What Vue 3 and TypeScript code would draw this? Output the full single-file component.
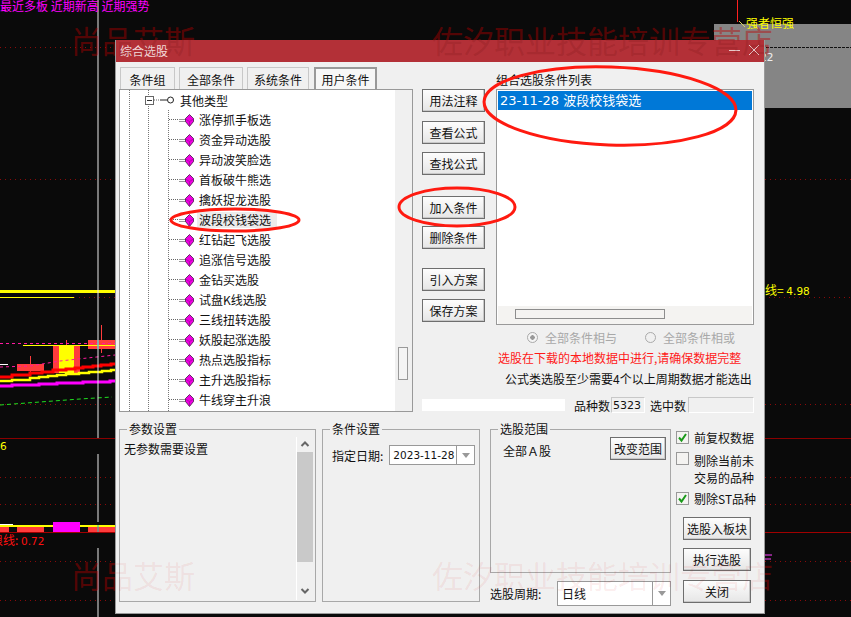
<script setup lang="ts">
interface TreeLeaf {
  label: string;
  hovered?: boolean;
}

const tabs = ["条件组", "全部条件", "系统条件", "用户条件"];

const leaves: TreeLeaf[] = [
  { label: "涨停抓手板选" },
  { label: "资金异动选股" },
  { label: "异动波笑脸选" },
  { label: "首板破牛熊选" },
  { label: "擒妖捉龙选股" },
  { label: "波段校钱袋选", hovered: true },
  { label: "红钻起飞选股" },
  { label: "追涨信号选股" },
  { label: "金钻买选股" },
  { label: "试盘K线选股" },
  { label: "三线扭转选股" },
  { label: "妖股起涨选股" },
  { label: "热点选股指标" },
  { label: "主升选股指标" },
  { label: "牛线穿主升浪" },
];

// 中间一列按钮，gap 是和上一个按钮的间距
const actions = [
  { label: "用法注释", gap: 0 },
  { label: "查看公式", gap: 9 },
  { label: "查找公式", gap: 8 },
  { label: "加入条件", gap: 21 },
  { label: "删除条件", gap: 7 },
  { label: "引入方案", gap: 19 },
  { label: "保存方案", gap: 8 },
];
</script>

<template>
  <div class="desk">
    <!-- 背后的K线图 -->
    <svg class="chart" width="851" height="617" viewBox="0 0 851 617">
      <g stroke="#8a0a0a" stroke-dasharray="1 4">
        <line x1="0" y1="47.5" x2="851" y2="47.5" />
        <line x1="0" y1="179.5" x2="851" y2="179.5" />
        <line x1="74" y1="297.5" x2="851" y2="297.5" />
        <line x1="0" y1="404.5" x2="851" y2="404.5" />
        <line x1="0" y1="477.5" x2="851" y2="477.5" />
        <line x1="0" y1="504.5" x2="851" y2="504.5" />
        <line x1="0" y1="561.5" x2="851" y2="561.5" />
        <line x1="0" y1="600.5" x2="851" y2="600.5" />
      </g>
      <rect x="714" y="24" width="137" height="84" fill="#858585" />
      <line x1="714" y1="47.5" x2="851" y2="47.5" stroke="#111" stroke-dasharray="3 1" />
      <line x1="0" y1="438.5" x2="851" y2="438.5" stroke="#8a0000" />
      <line x1="0" y1="532.5" x2="851" y2="532.5" stroke="#a00000" />
      <rect x="0" y="290" width="115" height="3" fill="#ffff00" />
      <rect x="0" y="297" width="74" height="1" fill="#ffff00" />

      <rect x="88" y="340" width="27" height="9" fill="#ff3c3c" />
      <line x1="101.5" y1="325" x2="101.5" y2="353" stroke="#ff3c3c" />
      <rect x="53" y="345" width="27" height="28" fill="#ff3c3c" />
      <rect x="59" y="345" width="15" height="28" fill="#ffff00" />
      <line x1="66.5" y1="340" x2="66.5" y2="345" stroke="#ff3c3c" />
      <rect x="17" y="364" width="27" height="7" fill="#ff3c3c" />
      <line x1="30.5" y1="356" x2="30.5" y2="374" stroke="#ff3c3c" />
      <line x1="23" y1="345.5" x2="115" y2="345.5" stroke="#ffff00" />
      <rect x="0" y="364" width="8" height="1" fill="#fff" />
      <path d="M0 343.5H115" stroke="#ff1aa0" stroke-dasharray="3 3" fill="none" />
      <path d="M0 367L30 366L60 361L115 355" stroke="#ff1aa0" stroke-dasharray="3 3" fill="none" />
      <path d="M0 377H12V375H30V373H42V372H53V370H66V369H75V368H83V367H93V366H101V365H111V364H115" stroke="#ff0000" stroke-width="3" fill="none" />
      <path d="M0 381H12V380H30V378H39V377H48V376H57V375H66V374H79V373H89V372H102V371H111V370H115" stroke="#ffff00" stroke-width="2.5" fill="none" />
      <path d="M0 386H12V385H39V384H57V383H83V382H110V381H115" stroke="#ff00ff" stroke-width="3" fill="none" />
      <path d="M0 405L40 402L80 399L112 397" stroke="#20e020" stroke-dasharray="4 3" fill="none" />

      <rect x="0" y="527" width="9" height="5" fill="#ff3c3c" />
      <rect x="17" y="527" width="27" height="5" fill="#ff3c3c" />
      <rect x="88" y="527" width="27" height="5" fill="#ff3c3c" />
      <rect x="0" y="525" width="115" height="2" fill="#ffff00" />
      <rect x="0" y="524" width="13" height="1" fill="#fff" />
      <rect x="53" y="522" width="27" height="10" fill="#ff00ff" />

      <path d="M98 0V438M98 454V522M98 548V617" stroke="#e8e8e8" fill="none" />
      <path d="M98 340V349M98 525V532" stroke="#20c0c0" fill="none" />
      <line x1="737.5" y1="0" x2="737.5" y2="22" stroke="#ff2020" />
      <path d="M745 27L739 21" stroke="#d8d860" fill="none" />
      <path d="M765 555h7M765 559h6" stroke="#ff40ff" fill="none" />
    </svg>

    <!-- 窗口后面的水印 -->
    <div class="mark mark-left mark-top mark-back">尚品艾斯</div>
    <div class="mark mark-right mark-top mark-back">佐汐职业技能培训专营店</div>
    <div class="mark mark-left mark-bottom mark-back">尚品艾斯</div>
    <div class="mark mark-right mark-bottom mark-back">佐汐职业技能培训专营店</div>

    <div class="quote-links">最近多板 近期新高 近期强势</div>
    <div class="tag tag-strong">强者恒强</div>
    <div class="tag tag-gray num">22</div>
    <div class="tag tag-line">线= <span class="num">4.98</span></div>
    <div class="tag tag-six num">6</div>
    <div class="tag tag-red">浪线: <span class="num">0.72</span></div>

    <!-- 综合选股窗口 -->
    <section class="dialog">
      <header class="titlebar">
        <span>综合选股</span>
        <div class="window-btns">
          <svg width="12" height="12" viewBox="0 0 12 12"><path d="M1 6.5H12" stroke="#e8c8c8" fill="none" /></svg>
          <svg width="12" height="12" viewBox="0 0 12 12"><path d="M1 1L11 11M11 1L1 11" stroke="#e8c8c8" fill="none" /></svg>
        </div>
      </header>

      <div class="upper">
        <div class="tree-col">
          <div class="tabs">
            <div v-for="(tab, i) in tabs" :key="tab" class="tab" :class="'tab-' + i">{{ tab }}</div>
          </div>
          <div class="tree">
            <div class="tree-rows">
              <div class="guide guide-a"></div>
              <div class="guide guide-b"></div>
              <div class="guide guide-c"></div>
              <div class="row parent">
                <span class="expander"></span>
                <svg class="node-icon" width="20" height="10" viewBox="0 0 20 10">
                  <path d="M0 5H6" stroke="#666" stroke-dasharray="1 1" fill="none" />
                  <path d="M6 5H13" stroke="#222" fill="none" />
                  <circle cx="16.5" cy="5" r="3" fill="#fff" stroke="#222" />
                </svg>
                <span class="parent-label">其他类型</span>
              </div>
              <div v-for="leaf in leaves" :key="leaf.label" class="row leaf">
                <svg class="leaf-icon" width="26" height="13" viewBox="0 0 26 13">
                  <path d="M0 5.5H11" stroke="#666" stroke-dasharray="1 1" fill="none" />
                  <path d="M10 5.5H17M10 7.5H17" stroke="#999" fill="none" />
                  <path d="M20.5 .5L24.5 4.5V7.5L20.5 12.5L16.5 7.5V4.5Z" fill="#f000e0" stroke="#3a2040" stroke-width=".8" />
                  <path d="M16.5 5L20.5 7.5L24.5 5M20.5 7.5V12" stroke="#a000a0" stroke-width=".7" fill="none" />
                </svg>
                <span class="leaf-label" :class="{ hovered: leaf.hovered }">{{ leaf.label }}</span>
              </div>
            </div>
            <div class="tree-scroll"><div class="tree-thumb"></div></div>
          </div>
        </div>

        <div class="actions">
          <button v-for="a in actions" :key="a.label" class="btn" :style="{ marginTop: a.gap + 'px' }">{{ a.label }}</button>
        </div>

        <div class="list-col">
          <div class="list-title">组合选股条件列表</div>
          <div class="list">
            <div class="list-body">
              <div class="list-selected">23-11-28 波段校钱袋选</div>
            </div>
            <div class="hscroll"><div class="hthumb"></div></div>
          </div>
          <div class="radios">
            <span class="radio checked"></span><span class="radio-label">全部条件相与</span>
            <span class="radio second"></span><span class="radio-label">全部条件相或</span>
          </div>
          <div class="warn">选股在下载的本地数据中进行,请确保数据完整</div>
          <div class="hint">公式类选股至少需要4个以上周期数据才能选出</div>
        </div>
      </div>

      <div class="counts">
        <div class="progress"></div>
        <span class="count-a">品种数</span>
        <span class="count-box count-num">5323</span>
        <span class="count-b">选中数</span>
        <span class="count-box count-empty"></span>
      </div>

      <div class="lower">
        <fieldset class="group group-param">
          <legend>参数设置</legend>
          <div class="param-text">无参数需要设置</div>
          <div class="param-scroll">
            <svg width="16" height="10" viewBox="0 0 16 10"><path d="M4.5 7L8 3.5L11.5 7" stroke="#666" stroke-width="2" fill="none" /></svg>
            <div class="param-thumb"></div>
            <svg width="16" height="10" viewBox="0 0 16 10"><path d="M4.5 3L8 6.5L11.5 3" stroke="#666" stroke-width="2" fill="none" /></svg>
          </div>
        </fieldset>

        <fieldset class="group group-cond">
          <legend>条件设置</legend>
          <div class="date-row">
            <span>指定日期:</span>
            <div class="combo date-combo">
              <span class="combo-text date-text">2023-11-28</span>
              <span class="combo-arrow"></span>
            </div>
          </div>
        </fieldset>

        <div class="range-col">
          <fieldset class="group group-range">
            <legend>选股范围</legend>
            <div class="range-body">
              <span class="range-text">全部Ａ股</span>
              <button class="btn range-btn">改变范围</button>
            </div>
          </fieldset>
          <div class="period">
            <span>选股周期:</span>
            <div class="combo period-combo">
              <span class="combo-text">日线</span>
              <span class="combo-arrow"></span>
            </div>
          </div>
        </div>

        <div class="side-col">
          <label class="check">
            <span class="box">
              <svg width="11" height="11" viewBox="0 0 11 11"><path d="M2 5.5L4.5 8.5L9 2" stroke="#1a9a1a" stroke-width="2" fill="none" /></svg>
            </span>
            <span>前复权数据</span>
          </label>
          <label class="check check-two"><span class="box"></span><span class="two-lines">剔除当前未<br />交易的品种</span></label>
          <label class="check check-st">
            <span class="box">
              <svg width="11" height="11" viewBox="0 0 11 11"><path d="M2 5.5L4.5 8.5L9 2" stroke="#1a9a1a" stroke-width="2" fill="none" /></svg>
            </span>
            <span>剔除ST品种</span>
          </label>
          <div class="side-btns">
            <button class="btn side-btn">选股入板块</button>
            <button class="btn side-btn">执行选股</button>
            <button class="btn side-btn">关闭</button>
          </div>
        </div>
      </div>

      <!-- 水印透过窗口的部分 -->
      <div class="mark front-left front-top">尚品艾斯</div>
      <div class="mark front-right front-top">佐汐职业技能培训专营店</div>
      <div class="mark front-left front-bottom">尚品艾斯</div>
      <div class="mark front-right front-bottom">佐汐职业技能培训专营店</div>
    </section>

    <!-- 红色手绘圈 -->
    <svg class="circles" width="851" height="617" viewBox="0 0 851 617">
      <g fill="none" stroke="#ff1a10" stroke-width="3">
        <ellipse cx="610" cy="106" rx="126" ry="39" transform="rotate(2 610 106)" />
        <ellipse cx="457" cy="207" rx="58" ry="19" />
        <ellipse cx="235" cy="220" rx="64" ry="11" />
      </g>
    </svg>
  </div>
</template>

<style>
html,
body {
  margin: 0;
  background: #0a0a0a;
}
</style>

<style scoped>
.desk {
  position: relative;
  width: 851px;
  height: 617px;
  overflow: hidden;
  background: #0a0a0a;
  font-family: "Noto Sans CJK SC", "Liberation Sans", sans-serif;
  font-size: 12px;
  color: #111;
}

.chart,
.circles {
  position: absolute;
  left: 0;
  top: 0;
}

.circles {
  pointer-events: none;
}

.quote-links {
  position: absolute;
  left: 0;
  top: 0;
  color: #ff00ff;
  line-height: 11px;
  white-space: nowrap;
}

.tag {
  position: absolute;
  line-height: 16px;
  white-space: nowrap;
}

.num {
  font-family: "DejaVu Sans", sans-serif;
  font-size: 10.5px;
}

.tag-strong {
  left: 746px;
  top: 15px;
  color: #ffff00;
}

.tag-gray {
  left: 760px;
  top: 49px;
  color: #eee;
}

.tag-line {
  left: 765px;
  top: 282px;
  color: #ffff00;
}

.tag-six {
  left: 0;
  top: 438px;
  color: #ffff00;
}

.tag-red {
  left: -9px;
  top: 532px;
  color: #ff1010;
}

.mark {
  position: absolute;
  font-size: 31px;
  pointer-events: none;
  white-space: nowrap;
  line-height: 1;
}

.mark-back {
  color: rgba(190, 0, 0, 0.42);
}

.mark-left {
  left: 71px;
}

.mark-right {
  left: 432px;
}

.mark-top {
  top: 24px;
}

.mark-bottom {
  top: 559px;
}

.front-left {
  left: -45px;
}

.front-right {
  left: 316px;
}

.front-top {
  top: -16px;
  color: rgba(90, 0, 0, 0.14);
}

.front-bottom {
  top: 519px;
  color: rgba(220, 0, 0, 0.08);
}

.dialog {
  position: absolute;
  left: 115px;
  top: 40px;
  width: 650px;
  height: 574px;
  box-sizing: border-box;
  overflow: hidden;
  background: #f0f0f0;
  border: 1px solid #9a9a9a;
  border-top: 0;
  display: flex;
  flex-direction: column;
}

.titlebar {
  height: 22px;
  flex: none;
  background: #b33037;
  color: #f3dcdc;
  line-height: 24px;
  padding-left: 4px;
  display: flex;
  justify-content: space-between;
  align-items: center;
}

.window-btns {
  display: flex;
  gap: 8px;
  padding-right: 4px;
  margin-top: -2px;
}

.upper {
  display: flex;
  padding-left: 3px;
  height: 328px;
  flex: none;
}

.tree-col {
  width: 294px;
  flex: none;
  padding-top: 5px;
}

.tabs {
  display: flex;
  height: 22px;
  gap: 4px;
  padding-left: 1px;
}

.tab {
  box-sizing: border-box;
  height: 22px;
  border: 1px solid #c8c8c8;
  border-bottom: 0;
  text-align: center;
  line-height: 23px;
  background: #f0f0f0;
}

.tab-0 {
  width: 55px;
}

.tab-1 {
  width: 64px;
}

.tab-2 {
  width: 62px;
}

.tab-3 {
  width: 63px;
  margin-left: 1px;
  border: 2px solid #999;
  border-bottom: 0;
  line-height: 22px;
  background: #f7f7f7;
}

.tree {
  box-sizing: border-box;
  height: 323px;
  border: 1px solid #999;
  background: #fff;
  display: flex;
}

.tree-rows {
  position: relative;
  flex: 1;
  overflow: hidden;
}

.guide {
  position: absolute;
  top: 0;
  bottom: 0;
  width: 0;
  border-left: 1px dotted #777;
}

.guide-a {
  left: 9px;
}

.guide-b {
  left: 28px;
}

.guide-c {
  left: 48px;
  top: 20px;
}

.row {
  position: relative;
  height: 20px;
  display: flex;
  align-items: center;
  white-space: nowrap;
}

.parent {
  padding-left: 25px;
}

.expander {
  box-sizing: border-box;
  width: 9px;
  height: 9px;
  border: 1px solid #666;
  background: linear-gradient(#333, #333) center / 5px 1px no-repeat #fff;
  flex: none;
}

.node-icon {
  flex: none;
}

.parent-label {
  margin-left: 6px;
}

.leaf {
  padding-left: 49px;
}

.leaf-icon {
  flex: none;
}

.leaf-label {
  margin-left: 2px;
  padding: 0 2px;
  line-height: 16px;
}

.leaf-label.hovered {
  background: #ececec;
  padding-right: 6px;
}

.tree-scroll {
  width: 17px;
  flex: none;
  background: #f0f0f0;
  padding: 257px 0 0 3px;
  box-sizing: border-box;
}

.tree-thumb {
  box-sizing: border-box;
  width: 10px;
  height: 33px;
  border: 1px solid #999;
  background: #f4f4f4;
}

.actions {
  width: 63px;
  flex: none;
  margin-left: 9px;
  padding-top: 27px;
  display: flex;
  flex-direction: column;
}

.btn {
  box-sizing: border-box;
  height: 23px;
  width: 63px;
  flex: none;
  padding: 0;
  margin: 0;
  border: 1px solid #6e6e6e;
  background: linear-gradient(#fdfdfd, #e6e6e6);
  box-shadow: inset -1px -1px 0 #c8c8c8;
  font: inherit;
  color: #111;
  line-height: 20px;
}

.list-col {
  width: 258px;
  flex: none;
  margin-left: 11px;
  padding-top: 8px;
}

.list-title {
  line-height: 19px;
}

.list {
  box-sizing: border-box;
  height: 236px;
  border: 1px solid #999;
  background: #fff;
  display: flex;
  flex-direction: column;
}

.list-body {
  flex: 1;
  padding: 1px 1px 0;
}

.list-selected {
  height: 19px;
  background: #0078d7;
  color: #fff;
  padding-left: 2px;
  line-height: 20px;
  font-family: "DejaVu Sans", "Noto Sans CJK SC", sans-serif;
  font-size: 13px;
  white-space: nowrap;
}

.hscroll {
  height: 18px;
  background: #f4f3f1;
  margin: 0 1px;
  flex: none;
  padding: 3px 0 0 17px;
  box-sizing: border-box;
}

.hthumb {
  box-sizing: border-box;
  width: 150px;
  height: 10px;
  border: 1px solid #8d8d8d;
  background: #f4f3f1;
}

.radios {
  display: flex;
  align-items: center;
  height: 24px;
  padding-left: 31px;
  color: #a8a8a8;
}

.radio {
  box-sizing: border-box;
  width: 11px;
  height: 11px;
  border-radius: 50%;
  border: 1px solid #aaa;
  flex: none;
}

.radio.checked {
  background: radial-gradient(circle, #999 0 2px, #f4f4f4 2.5px);
}

.radio.second {
  margin-left: 28px;
}

.radio-label {
  margin-left: 7px;
}

.warn {
  color: #ff1a1a;
  line-height: 18px;
  margin-left: 2px;
  white-space: nowrap;
}

.hint {
  color: #111;
  line-height: 24px;
  margin-left: 9px;
  white-space: nowrap;
}

.counts {
  display: flex;
  height: 16px;
  margin-top: 7px;
  align-items: center;
  flex: none;
}

.progress {
  width: 143px;
  height: 12px;
  margin-left: 306px;
  background: #fff;
}

.count-a {
  margin-left: 9px;
}

.count-box {
  box-sizing: border-box;
  height: 16px;
  border: 1px solid #c8c8c8;
  border-right-color: #fff;
  border-bottom-color: #fff;
  line-height: 15px;
  padding-left: 1px;
}

.count-num {
  width: 34px;
  margin-left: 1px;
  font-family: "DejaVu Sans", sans-serif;
  font-size: 11px;
}

.count-b {
  margin-left: 5px;
}

.count-empty {
  width: 66px;
  margin-left: 2px;
}

.lower {
  display: flex;
  padding: 16px 0 0 3px;
  flex: 1;
  min-height: 0;
}

.group {
  box-sizing: border-box;
  margin: 0;
  padding: 0;
  border: 1px solid #a8a8a8;
  min-width: 0;
}

.group legend {
  margin-left: 7px;
  padding: 0 2px;
  line-height: 14px;
}

.group-param {
  width: 197px;
  height: 180px;
  margin-top: -7px;
  display: flex;
}

.param-text {
  flex: 1;
  padding: 5px 0 0 4px;
  line-height: 16px;
}

.param-scroll {
  width: 16px;
  margin: 1px 2px 1px 0;
  border-left: 1px solid #fff;
  display: flex;
  flex-direction: column;
  align-items: center;
  padding-top: 2px;
}

.param-thumb {
  width: 100%;
  height: 110px;
  margin: 3px 0 24px;
  background: #c9c9c9;
}

.group-cond {
  width: 158px;
  height: 180px;
  margin: -7px 0 0 6px;
}

.date-row {
  display: flex;
  align-items: center;
  gap: 6px;
  padding: 9px 0 0 9px;
}

.combo {
  box-sizing: border-box;
  background: #fff;
  border: 1px solid #999;
  display: flex;
  flex: none;
}

.date-combo {
  width: 86px;
  height: 20px;
}

.combo-text {
  flex: 1;
  padding-left: 3px;
  line-height: 18px;
  overflow: hidden;
  white-space: nowrap;
}

.date-text {
  font-family: "DejaVu Sans", sans-serif;
  font-size: 10.5px;
}

.combo-arrow {
  width: 17px;
  flex: none;
  border-left: 1px solid #999;
  display: flex;
  align-items: center;
  justify-content: center;
}

.combo-arrow::after {
  content: "";
  width: 0;
  height: 0;
  border-left: 4px solid transparent;
  border-right: 4px solid transparent;
  border-top: 5px solid #999;
}

.range-col {
  width: 181px;
  margin: -7px 0 0 10px;
  flex: none;
}

.group-range {
  height: 151px;
}

.range-body {
  display: flex;
  justify-content: space-between;
  align-items: flex-start;
  padding: 1px 4px 0 12px;
}

.range-text {
  line-height: 16px;
  padding-top: 6px;
}

.range-btn {
  width: 56px;
}

.period {
  display: flex;
  align-items: center;
  justify-content: space-between;
  margin-top: 8px;
}

.period-combo {
  width: 114px;
  height: 25px;
}

.period-combo .combo-text {
  line-height: 23px;
  padding-left: 4px;
}

.side-col {
  flex: 1;
  margin-left: 5px;
  display: flex;
  flex-direction: column;
}

.check {
  display: flex;
  gap: 5px;
  line-height: 17px;
  white-space: nowrap;
  height: 17px;
}

.check-two {
  margin-top: 4px;
  height: 36px;
}

.two-lines {
  padding-top: 2px;
}

.check-st {
  margin-top: 4px;
}

.box {
  box-sizing: border-box;
  width: 13px;
  height: 13px;
  margin-top: 2px;
  border: 1px solid #999;
  background: #f4f3f1;
  flex: none;
  display: flex;
}

.side-btns {
  display: flex;
  flex-direction: column;
  gap: 8px;
  margin: 10px 0 0 7px;
}

.side-btn {
  width: 68px;
}

.side-btn:last-child {
  margin-top: 1px;
}
</style>
